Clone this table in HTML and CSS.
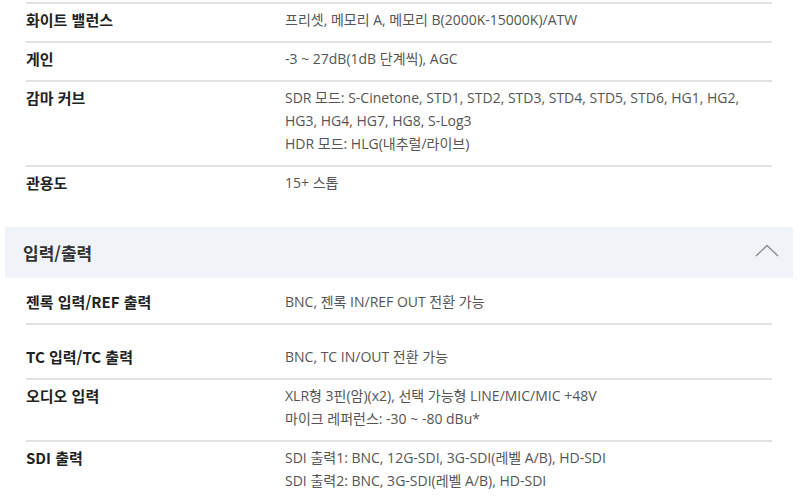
FILE: index.html
```html
<!DOCTYPE html>
<html lang="ko">
<head>
<meta charset="utf-8">
<link rel="stylesheet" href="styles.css">
</head>
<body>
<div class="page">
  <section class="group">
    <div class="row">
      <div class="label">화이트 밸런스</div>
      <div class="value">프리셋, 메모리 A, 메모리 B(2000K-15000K)/ATW</div>
    </div>
    <div class="row">
      <div class="label">게인</div>
      <div class="value">-3 ~ 27dB(1dB 단계씩), AGC</div>
    </div>
    <div class="row">
      <div class="label">감마 커브</div>
      <div class="value">SDR 모드: S-Cinetone, STD1, STD2, STD3, STD4, STD5, STD6, HG1, HG2,<br>HG3, HG4, HG7, HG8, S-Log3<br>HDR 모드: HLG(내추럴/라이브)</div>
    </div>
    <div class="row">
      <div class="label">관용도</div>
      <div class="value">15+ 스톱</div>
    </div>
  </section>

  <div class="section-head">
    <h2 class="section-title">입력/출력</h2>
    <svg class="chevron" width="24" height="13" viewBox="0 0 24 13" aria-hidden="true">
      <polyline points="1,12 12,1.5 23,12" fill="none" stroke="#8a8d92" stroke-width="1.4"/>
    </svg>
  </div>

  <section class="group">
    <div class="row row-first">
      <div class="label">젠록 입력/REF 출력</div>
      <div class="value">BNC, 젠록 IN/REF OUT 전환 가능</div>
    </div>
    <div class="row row-tall">
      <div class="label">TC 입력/TC 출력</div>
      <div class="value">BNC, TC IN/OUT 전환 가능</div>
    </div>
    <div class="row">
      <div class="label">오디오 입력</div>
      <div class="value">XLR형 3핀(암)(x2), 선택 가능형 LINE/MIC/MIC +48V<br>마이크 레퍼런스: -30 ~ -80 dBu*</div>
    </div>
    <div class="row">
      <div class="label">SDI 출력</div>
      <div class="value">SDI 출력1: BNC, 12G-SDI, 3G-SDI(레벨 A/B), HD-SDI<br>SDI 출력2: BNC, 3G-SDI(레벨 A/B), HD-SDI</div>
    </div>
  </section>
</div>
</body>
</html>
```

FILE: styles.css
```css
* { box-sizing: border-box; }
html, body { margin: 0; padding: 0; background: #fff; }
body {
  font-family: "Open Sans", "Noto Sans CJK KR", sans-serif;
  color: #222;
}
.page {
  width: 800px;
  padding: 2px 0 0 5px;
}
.group {
  margin: 0 28px 0 21px;
}
.row {
  display: grid;
  grid-template-columns: 259px 1fr;
  border-top: 2px solid #e2e2e2;
  padding: 4px 0 10px;
  line-height: 23px;
}
.row-first { border-top: none; padding-top: 12px; }
.row-tall { padding-top: 20px; }
.label {
  font-family: "Noto Sans CJK KR", sans-serif;
  font-weight: 700;
  font-size: 15px;
  color: #222;
}
.value {
  font-size: 14px;
  color: #555;
}
.group:first-child .row:last-child { padding-bottom: 9px; }
.section-head {
  margin-top: 24px;
  width: 788px;
  height: 51px;
  background: #f0f3f8;
  display: flex;
  align-items: center;
  justify-content: space-between;
  padding: 0 14px 0 18px;
}
.section-title {
  margin: 0;
  font-family: "Noto Sans CJK KR", sans-serif;
  font-size: 17px;
  font-weight: 700;
  color: #333;
}
.chevron { display: block; margin-top: -4px; }
```
